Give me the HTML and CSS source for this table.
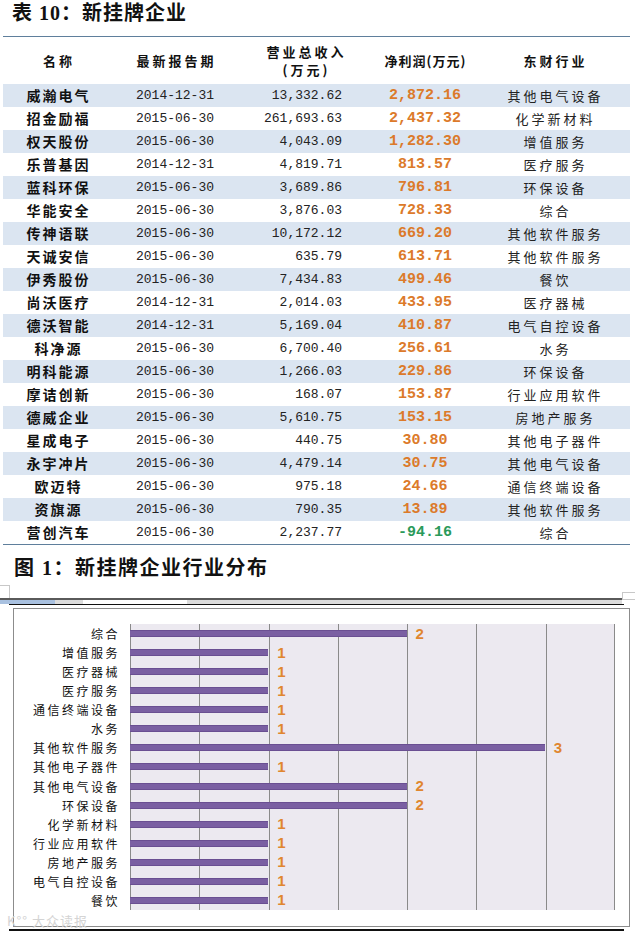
FILE: index.html
```html
<!DOCTYPE html>
<html lang="zh">
<head>
<meta charset="utf-8">
<title>新挂牌企业</title>
<link rel="stylesheet" href="styles.css">
</head>
<body>
<div class="page">
  <h1 class="title">表 10：新挂牌企业</h1>
  <div class="table">
    <div class="row thead">
      <div class="c hname">名称</div>
      <div class="c hdate">最新报告期</div>
      <div class="c hrev">营业总收入<br>(万元)</div>
      <div class="c hnp">净利润(万元)</div>
      <div class="c hind">东财行业</div>
    </div>
    <div class="row alt"><div class="name">威瀚电气</div><div class="date">2014-12-31</div><div class="rev">13,332.62</div><div class="np">2,872.16</div><div class="ind">其他电气设备</div></div>
    <div class="row"><div class="name">招金励福</div><div class="date">2015-06-30</div><div class="rev">261,693.63</div><div class="np">2,437.32</div><div class="ind">化学新材料</div></div>
    <div class="row alt"><div class="name">权天股份</div><div class="date">2015-06-30</div><div class="rev">4,043.09</div><div class="np">1,282.30</div><div class="ind">增值服务</div></div>
    <div class="row"><div class="name">乐普基因</div><div class="date">2014-12-31</div><div class="rev">4,819.71</div><div class="np">813.57</div><div class="ind">医疗服务</div></div>
    <div class="row alt"><div class="name">蓝科环保</div><div class="date">2015-06-30</div><div class="rev">3,689.86</div><div class="np">796.81</div><div class="ind">环保设备</div></div>
    <div class="row"><div class="name">华能安全</div><div class="date">2015-06-30</div><div class="rev">3,876.03</div><div class="np">728.33</div><div class="ind">综合</div></div>
    <div class="row alt"><div class="name">传神语联</div><div class="date">2015-06-30</div><div class="rev">10,172.12</div><div class="np">669.20</div><div class="ind">其他软件服务</div></div>
    <div class="row"><div class="name">天诚安信</div><div class="date">2015-06-30</div><div class="rev">635.79</div><div class="np">613.71</div><div class="ind">其他软件服务</div></div>
    <div class="row alt"><div class="name">伊秀股份</div><div class="date">2015-06-30</div><div class="rev">7,434.83</div><div class="np">499.46</div><div class="ind">餐饮</div></div>
    <div class="row"><div class="name">尚沃医疗</div><div class="date">2014-12-31</div><div class="rev">2,014.03</div><div class="np">433.95</div><div class="ind">医疗器械</div></div>
    <div class="row alt"><div class="name">德沃智能</div><div class="date">2014-12-31</div><div class="rev">5,169.04</div><div class="np">410.87</div><div class="ind">电气自控设备</div></div>
    <div class="row"><div class="name">科净源</div><div class="date">2015-06-30</div><div class="rev">6,700.40</div><div class="np">256.61</div><div class="ind">水务</div></div>
    <div class="row alt"><div class="name">明科能源</div><div class="date">2015-06-30</div><div class="rev">1,266.03</div><div class="np">229.86</div><div class="ind">环保设备</div></div>
    <div class="row"><div class="name">摩诘创新</div><div class="date">2015-06-30</div><div class="rev">168.07</div><div class="np">153.87</div><div class="ind">行业应用软件</div></div>
    <div class="row alt"><div class="name">德威企业</div><div class="date">2015-06-30</div><div class="rev">5,610.75</div><div class="np">153.15</div><div class="ind">房地产服务</div></div>
    <div class="row"><div class="name">星成电子</div><div class="date">2015-06-30</div><div class="rev">440.75</div><div class="np">30.80</div><div class="ind">其他电子器件</div></div>
    <div class="row alt"><div class="name">永宇冲片</div><div class="date">2015-06-30</div><div class="rev">4,479.14</div><div class="np">30.75</div><div class="ind">其他电气设备</div></div>
    <div class="row"><div class="name">欧迈特</div><div class="date">2015-06-30</div><div class="rev">975.18</div><div class="np">24.66</div><div class="ind">通信终端设备</div></div>
    <div class="row alt"><div class="name">资旗源</div><div class="date">2015-06-30</div><div class="rev">790.35</div><div class="np">13.89</div><div class="ind">其他软件服务</div></div>
    <div class="row"><div class="name">营创汽车</div><div class="date">2015-06-30</div><div class="rev">2,237.77</div><div class="np neg">-94.16</div><div class="ind">综合</div></div>
  </div>

  <h2 class="fig-title">图 1：新挂牌企业行业分布</h2>

  <div class="toolbar">
    <div class="tb-top"><span class="tb-box-l"></span><span class="tb-box-r"></span></div>
    <div class="tb-line"></div>
    <div class="tb-band"><span class="seg seg-blue"></span><span class="seg seg-gray1"></span><span class="seg seg-white"></span><span class="seg seg-gray2"></span></div>
    <div class="tb-black"></div>
  </div>

  <div class="chart">
    <div class="labels">
      <div>综合</div><div>增值服务</div><div>医疗器械</div><div>医疗服务</div><div>通信终端设备</div>
      <div>水务</div><div>其他软件服务</div><div>其他电子器件</div><div>其他电气设备</div><div>环保设备</div>
      <div>化学新材料</div><div>行业应用软件</div><div>房地产服务</div><div>电气自控设备</div><div>餐饮</div>
    </div>
    <div class="plot">
      <div class="brow"><span class="bar" style="width:57.143%"></span><span class="val">2</span></div>
      <div class="brow"><span class="bar" style="width:28.571%"></span><span class="val">1</span></div>
      <div class="brow"><span class="bar" style="width:28.571%"></span><span class="val">1</span></div>
      <div class="brow"><span class="bar" style="width:28.571%"></span><span class="val">1</span></div>
      <div class="brow"><span class="bar" style="width:28.571%"></span><span class="val">1</span></div>
      <div class="brow"><span class="bar" style="width:28.571%"></span><span class="val">1</span></div>
      <div class="brow"><span class="bar" style="width:85.714%"></span><span class="val">3</span></div>
      <div class="brow"><span class="bar" style="width:28.571%"></span><span class="val">1</span></div>
      <div class="brow"><span class="bar" style="width:57.143%"></span><span class="val">2</span></div>
      <div class="brow"><span class="bar" style="width:57.143%"></span><span class="val">2</span></div>
      <div class="brow"><span class="bar" style="width:28.571%"></span><span class="val">1</span></div>
      <div class="brow"><span class="bar" style="width:28.571%"></span><span class="val">1</span></div>
      <div class="brow"><span class="bar" style="width:28.571%"></span><span class="val">1</span></div>
      <div class="brow"><span class="bar" style="width:28.571%"></span><span class="val">1</span></div>
      <div class="brow"><span class="bar" style="width:28.571%"></span><span class="val">1</span></div>
    </div>
  </div>
  <div class="bottom-line"></div>
  <div class="watermark">K°° 大众读报</div>
</div>
</body>
</html>
```

FILE: styles.css
```css
* { box-sizing: border-box; margin: 0; padding: 0; }

html, body {
  background: #fff;
}

body {
  margin: 0;
  width: 635px;
  height: 936px;
  overflow: hidden;
  font-family: "Noto Sans CJK SC", sans-serif;
  color: #111;
}

.page {
  position: relative;
  width: 635px;
  height: 936px;
}

.title {
  height: 36px;
  padding-left: 12px;
  padding-top: 1px;
  font: bold 20px/24px "Liberation Serif", "Noto Sans CJK SC", serif;
  letter-spacing: 1px;
  color: #111;
}

.table {
  margin-left: 3px;
  width: 627px;
  border-top: 1px solid #5f7f9c;
  border-bottom: 1px solid #5f7f9c;
}

.row {
  display: grid;
  grid-template-columns: 109px 126px 134px 106px 152px;
  height: 23px;
  align-items: center;
  line-height: 23px;
}

.row.alt {
  background: #dbe5f1;
}

.thead {
  height: 47px;
  line-height: 18px;
}

.c {
  text-align: center;
  font-weight: bold;
  font-size: 13px;
  letter-spacing: 3px;
  padding-left: 3px;
  color: #111;
}

.hrev {
  line-height: 18px;
}

.hnp {
  letter-spacing: 1px;
  padding-left: 1px;
}

.name {
  text-align: center;
  font-weight: bold;
  font-size: 14px;
  letter-spacing: 2px;
  padding-left: 2px;
  color: #111;
}

.date {
  text-align: center;
  font: 13px/23px "Liberation Mono", monospace;
  color: #222;
}

.rev {
  text-align: right;
  padding-right: 30px;
  font: 13px/23px "Liberation Mono", monospace;
  color: #222;
}

.np {
  text-align: center;
  font: bold 15px/23px "Liberation Mono", monospace;
  color: #dc7a2a;
}

.np.neg {
  color: #2a9a5a;
}

.ind {
  text-align: center;
  font-size: 13px;
  letter-spacing: 3px;
  padding-left: 3px;
  color: #222;
}

.fig-title {
  height: 40px;
  padding-left: 14px;
  padding-top: 12px;
  font: bold 20px/22px "Liberation Serif", "Noto Sans CJK SC", serif;
  letter-spacing: 1.5px;
  color: #111;
}

.tb-top {
  height: 13px;
  display: flex;
  justify-content: space-between;
}

.tb-box-l {
  width: 10px;
  height: 13px;
  border: 1px solid #c8c8c8;
  border-left: none;
  border-bottom: none;
}

.tb-box-r {
  width: 13px;
  height: 8px;
  margin-top: 7px;
  border: 1px solid #c8c8c8;
  border-right: none;
}

.tb-line {
  width: 622px;
  height: 2px;
  background: #5a5a5a;
}

.tb-band {
  width: 622px;
  height: 4px;
  display: flex;
}

.seg { display: block; height: 4px; }
.seg-blue { width: 55px; background: #a9c1e0; }
.seg-gray1 { width: 28px; background: #dcdcdc; }
.seg-white { width: 104px; background: #fff; }
.seg-gray2 { flex: 1; background: #dcdcdc; }

.tb-black {
  margin-left: 9px;
  width: 615px;
  height: 1px;
  background: #111;
}

.chart {
  margin-top: 3px;
  margin-left: 13px;
  width: 617px;
  height: 319px;
  border: 1px solid #8c8c8c;
  padding-top: 15px;
  display: grid;
  grid-template-columns: 116px 485px;
  align-content: start;
}

.labels {
  height: 286px;
  display: grid;
  grid-template-rows: repeat(15, 1fr);
}

.labels div {
  text-align: right;
  padding-right: 10px;
  font-size: 12px;
  line-height: 19px;
  letter-spacing: 2.5px;
  color: #111;
}

.plot {
  height: 286px;
  display: grid;
  grid-template-rows: repeat(15, 1fr);
  background-color: #ece9f0;
  background-image: repeating-linear-gradient(to right, #8a8a8a 0, #8a8a8a 1px, transparent 1px, transparent 69.286px);
  border-right: 1px solid #8a8a8a;
}

.brow {
  display: flex;
  align-items: center;
}

.bar {
  display: block;
  height: 7px;
  background: #7a5fa2;
  border-top: 1px solid #6a4f92;
  border-bottom: 1px solid #6a4f92;
}

.val {
  margin-left: 9px;
  font: bold 15px/16px "Liberation Sans", sans-serif;
  color: #e0862f;
}

.bottom-line {
  margin-top: 2px;
  margin-left: 9px;
  width: 615px;
  height: 2px;
  background: #111;
}

.watermark {
  position: absolute;
  left: 7px;
  top: 913px;
  font-size: 13px;
  line-height: 16px;
  color: #d4d4d4;
  letter-spacing: 1px;
}
```
